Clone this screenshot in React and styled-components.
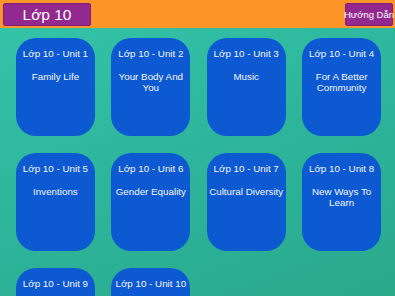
import React from 'react';
import styled, { createGlobalStyle } from 'styled-components';

const GlobalStyle = createGlobalStyle`
	html, body {
		margin: 0;
		padding: 0;
		height: 100%;
		overflow: hidden;
	}
	body {
		font-family: 'Liberation Sans', Arial, sans-serif;
	}
	#root {
		height: 100%;
	}
`;

const Page = styled.div`
	height: 100%;
	display: flex;
	flex-flow: column;
	background: linear-gradient(160deg, #34c5aa 0%, #2db49a 55%, #2aa98b 100%);
`;

const Header = styled.header`
	height: 28px;
	flex-shrink: 0;
	background: #fc9428;
	display: flex;
	align-items: flex-start;
	justify-content: space-between;
	padding: 3px 2px 0 3px;
	box-sizing: border-box;
`;

const HeaderButton = styled.button`
	height: 23px;
	width: ${props => props.$width};
	background: #93288f;
	border: 1px solid #7d1f7a;
	border-radius: 2px;
	color: #fff;
	font-family: 'Liberation Sans', Arial, sans-serif;
	font-size: ${props => props.$size};
	padding: 0;
	white-space: nowrap;
	display: flex;
	align-items: center;
	justify-content: center;
	box-sizing: border-box;
	cursor: pointer;
`;

const Grid = styled.div`
	display: grid;
	grid-template-columns: repeat(4, 1fr);
	grid-auto-rows: 98px;
	column-gap: 16.5px;
	row-gap: 17px;
	padding: 10px 14px 0 16px;
`;

const UnitCard = styled.div`
	background: #0c59d1;
	border-radius: 20px;
	color: #f4f6fb;
	text-align: center;
	display: flex;
	flex-flow: column;
	align-items: center;
	padding: 10px 0 0;
	box-sizing: border-box;
	cursor: pointer;
`;

const UnitLabel = styled.div`
	font-size: 9.8px;
	line-height: 12px;
	white-space: nowrap;
`;

const UnitTitle = styled.div`
	font-size: 9.8px;
	line-height: 11.7px;
	margin-top: 10.5px;
	padding: 0 2px;
`;

const units = [
	'Family Life',
	'Your Body And You',
	'Music',
	'For A Better Community',
	'Inventions',
	'Gender Equality',
	'Cultural Diversity',
	'New Ways To Learn',
	'Preserving The Environment',
	'Ecotourism'
];

const App = () => {
	return (
		<Page>
			<GlobalStyle />
			<Header>
				<HeaderButton $width="88px" $size="15.5px">Lớp 10</HeaderButton>
				<HeaderButton $width="48px" $size="9.5px">Hướng Dẫn</HeaderButton>
			</Header>
			<Grid>
				{units.map((title, i) => (
					<UnitCard key={i}>
						<UnitLabel>Lớp 10 - Unit {i + 1}</UnitLabel>
						<UnitTitle>{title}</UnitTitle>
					</UnitCard>
				))}
			</Grid>
		</Page>
	);
};

export default App;
